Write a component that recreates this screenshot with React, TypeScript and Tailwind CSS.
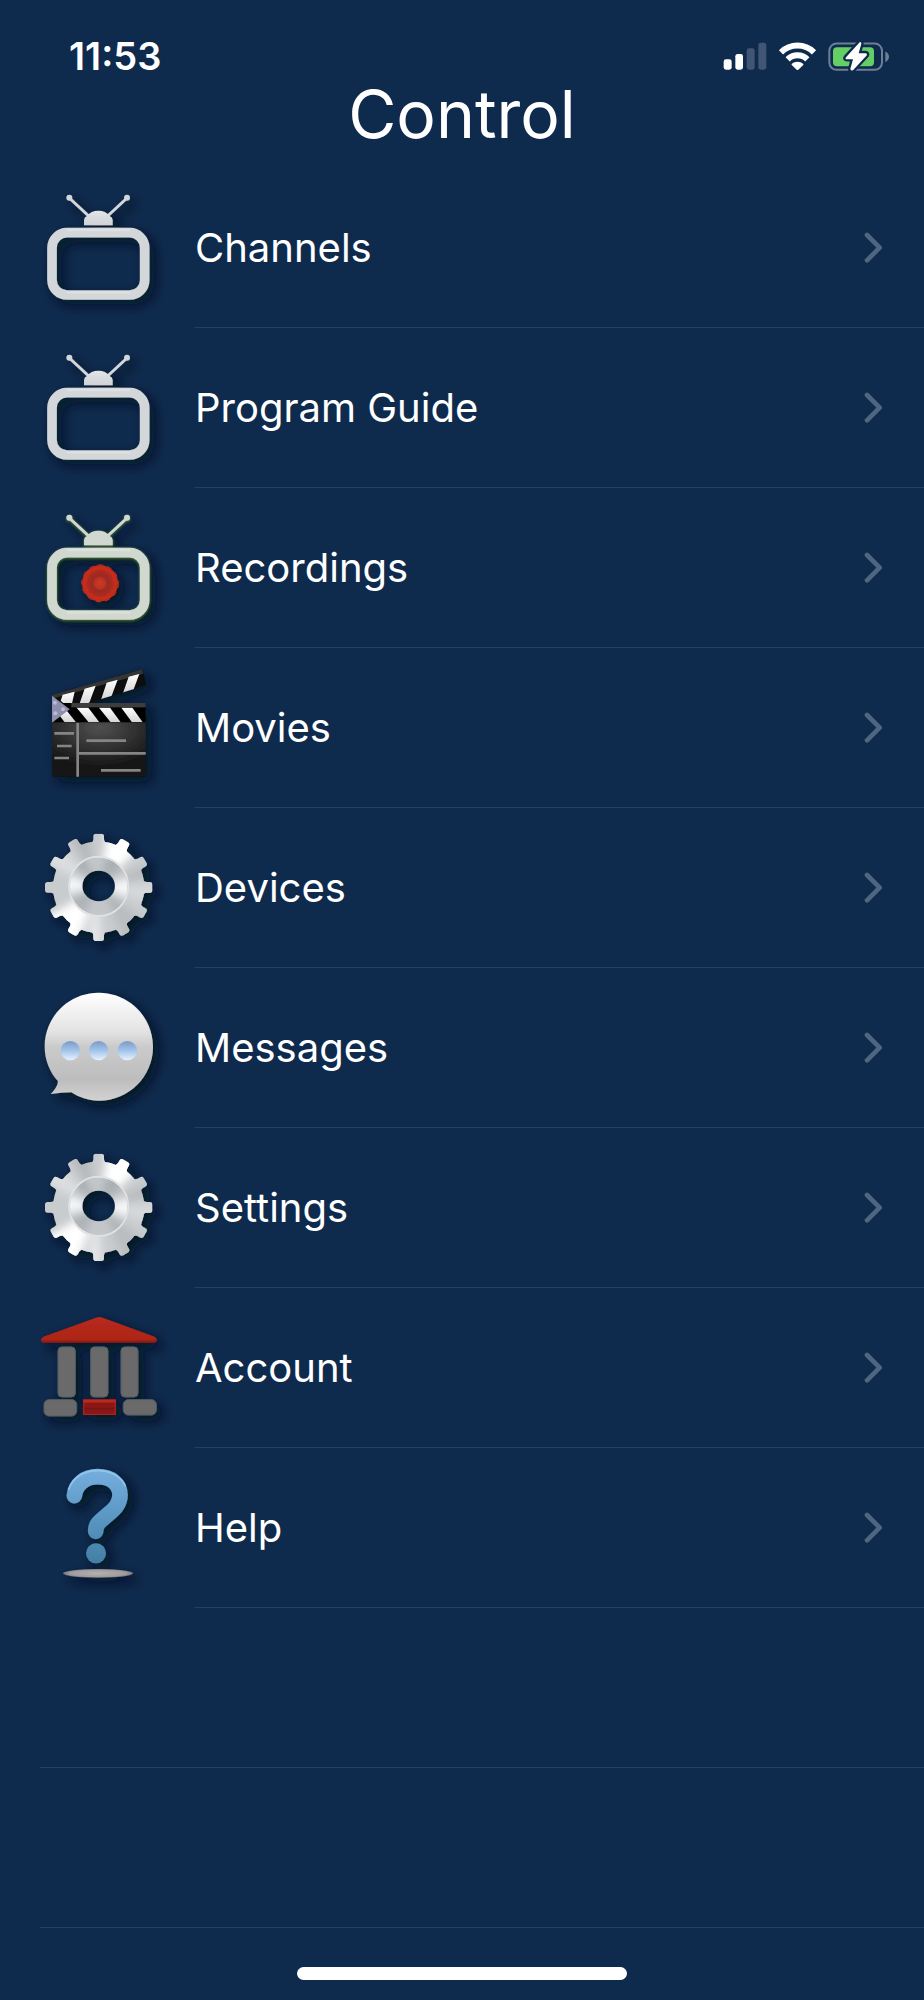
import type { ReactNode } from "react";

type MenuItem = {
  label: string;
  href: string;
  icon: ReactNode;
};

const TEETH = [0, 30, 60, 90, 120, 150, 180, 210, 240, 270, 300, 330];

// Gradients, filters and clips shared by all of the icons below.
function IconDefs() {
  return (
    <svg className="absolute h-0 w-0" aria-hidden="true">
      <defs>
        <filter id="shadow" x="-20%" y="-20%" width="150%" height="150%">
          <feDropShadow dx="16" dy="16" stdDeviation="17" floodColor="#000a18" floodOpacity="0.8" />
        </filter>
        <filter id="green-edge" x="-10%" y="-10%" width="120%" height="120%">
          <feDropShadow dx="0" dy="2" stdDeviation="3" floodColor="#4d7a22" floodOpacity="1" />
        </filter>
        <filter id="soft" x="-20%" y="-20%" width="140%" height="140%">
          <feGaussianBlur stdDeviation="12" />
        </filter>
        <linearGradient id="dome" x1="0" y1="0" x2="0" y2="1">
          <stop offset="0" stopColor="#e3e5e7" />
          <stop offset="1" stopColor="#cfd3d6" />
        </linearGradient>
        <radialGradient id="record">
          <stop offset="0" stopColor="#cf3a22" />
          <stop offset="0.28" stopColor="#bd3222" />
          <stop offset="0.42" stopColor="#9a2a20" />
          <stop offset="0.66" stopColor="#a82c20" />
          <stop offset="0.85" stopColor="#c92d1b" />
          <stop offset="1" stopColor="#c02a1a" />
        </radialGradient>
        <radialGradient id="slate" cx="0.5" cy="0.1" r="0.75">
          <stop offset="0" stopColor="#505050" />
          <stop offset="0.6" stopColor="#2c2c2c" />
          <stop offset="1" stopColor="#141414" />
        </radialGradient>
        <linearGradient id="stripe" x1="0" y1="0" x2="0" y2="1">
          <stop offset="0" stopColor="#ffffff" />
          <stop offset="1" stopColor="#d4d4d4" />
        </linearGradient>
        <linearGradient id="bubble" x1="0" y1="0" x2="0" y2="1">
          <stop offset="0" stopColor="#ffffff" />
          <stop offset="0.35" stopColor="#e4e4e5" />
          <stop offset="0.5" stopColor="#cbcbcc" />
          <stop offset="0.8" stopColor="#bdbdbe" />
          <stop offset="1" stopColor="#d2d2d2" />
        </linearGradient>
        <linearGradient id="dot" x1="0" y1="0" x2="0" y2="1">
          <stop offset="0" stopColor="#7b9bc6" />
          <stop offset="0.45" stopColor="#9dc0e8" />
          <stop offset="1" stopColor="#e6f2ff" />
        </linearGradient>
        <linearGradient id="roof" x1="0" y1="0" x2="0" y2="1">
          <stop offset="0" stopColor="#b82a1c" />
          <stop offset="0.86" stopColor="#ae2517" />
          <stop offset="1" stopColor="#7c1712" />
        </linearGradient>
        <linearGradient id="question" gradientUnits="userSpaceOnUse" x1="0" y1="58" x2="0" y2="340">
          <stop offset="0" stopColor="#76aede" />
          <stop offset="0.5" stopColor="#5b98c4" />
          <stop offset="1" stopColor="#427ea3" />
        </linearGradient>
        <radialGradient id="floor">
          <stop offset="0" stopColor="#b5b0b0" />
          <stop offset="0.8" stopColor="#a09c9e" />
          <stop offset="1" stopColor="#77787f" />
        </radialGradient>
        <clipPath id="gear-shape">
          <circle cx="206" cy="202" r="137" />
          {TEETH.map((angle) => (
            <path
              key={angle}
              d="M190 49 Q190 41 198 41 H214 Q222 41 222 49 V58 Q223 67 232 72 H180 Q189 67 190 58 Z"
              transform={`rotate(${angle} 206 202)`}
            />
          ))}
        </clipPath>
        <clipPath id="gear-ring">
          <circle cx="206" cy="199" r="86" />
        </clipPath>
        <mask id="gear-hole">
          <rect x="0" y="0" width="420" height="420" fill="#fff" />
          <ellipse cx="206" cy="198" rx="49" ry="46" fill="#000" />
        </mask>
        <clipPath id="clap-top">
          <path d="M66 134 L336 60 L348 106 L118 176 L66 140 Z" />
        </clipPath>
        <clipPath id="clap-bottom">
          <rect x="67" y="172" width="280" height="45" />
        </clipPath>
      </defs>
    </svg>
  );
}

function TvShape({ color, dome }: { color: string; dome: string }) {
  return (
    <>
      <path d="M148 84 L206 138 M321 84 L263 138" stroke={color} strokeWidth="9" fill="none" />
      <circle cx="148" cy="83" r="9" fill={color} />
      <circle cx="321" cy="83" r="9" fill={color} />
      <path d="M192 166 V150 Q193 141 201 138 Q213 122 235 122 Q257 122 269 138 Q277 141 278 150 V166 Z" fill={dome} />
      <rect x="96" y="188" width="278" height="187" rx="45" fill="none" stroke={color} strokeWidth="29" />
      <path d="M140 180 H330 M140 367 H330" stroke="#fff" strokeOpacity="0.25" strokeWidth="7" />
    </>
  );
}

function TvIcon() {
  return (
    <svg viewBox="0 -6 480 480" className="h-40 w-40 shrink-0" aria-hidden="true">
      <g filter="url(#shadow)">
        <TvShape color="#d3d7da" dome="url(#dome)" />
      </g>
    </svg>
  );
}

function RecordingIcon() {
  return (
    <svg viewBox="0 -6 480 480" className="h-40 w-40 shrink-0" aria-hidden="true">
      <g filter="url(#shadow)">
        <g filter="url(#green-edge)">
          <TvShape color="#d0d8cf" dome="#d0d8cf" />
        </g>
        <circle cx="240" cy="280" r="54" fill="url(#record)" />
        <circle cx="240" cy="280" r="55" fill="none" stroke="#c62c1b" strokeWidth="3" strokeDasharray="14 14" />
      </g>
    </svg>
  );
}

function MoviesIcon() {
  return (
    <svg viewBox="-30 -6 480 480" className="h-40 w-40 shrink-0" aria-hidden="true">
      <g filter="url(#shadow)">
        <path d="M66 134 L336 58 L349 104 L118 178 H66 Z" fill="#080808" />
        <path d="M66 134 L336 58 L339 72 L66 146 Z" fill="#343434" />
        <g clipPath="url(#clap-top)" fill="url(#stripe)">
          <path d="M98 134 L134 125 L122 178 L92 152 Z" />
          <path d="M164 116 L197 107 L178 158 L146 169 Z" />
          <path d="M230 98 L263 89 L244 140 L213 149 Z" />
          <path d="M296 80 L328 72 L309 123 L278 132 Z" />
        </g>
        <rect x="67" y="159" width="280" height="60" fill="#050505" />
        <rect x="124" y="159" width="223" height="13" fill="#3d3d3f" />
        <g clipPath="url(#clap-bottom)" fill="url(#stripe)">
          <path d="M70 172 H102 L138 217 H104 Z" />
          <path d="M140 173 H175 L208 217 H176 Z" />
          <path d="M207 173 H240 L272 217 H242 Z" />
          <path d="M274 173 H307 L338 217 H306 Z" />
        </g>
        <path d="M66 137 L119 178 L66 218 Z" fill="#8c8fae" />
        <g fill="#b9bbd0">
          <circle cx="75" cy="158" r="6" />
          <circle cx="99" cy="178" r="6" />
          <circle cx="76" cy="190" r="6" />
        </g>
        <rect x="67" y="217" width="280" height="163" fill="url(#slate)" />
        <path
          d="M143 219 V380 M147 310 H347 M73 250 H132 M81 288 H125 M73 324 H117 M169 272 H288 M213 361 H332"
          stroke="#858585"
          strokeWidth="8"
          fill="none"
        />
      </g>
    </svg>
  );
}

function GearIcon() {
  return (
    <svg viewBox="-30 -36 480 480" className="h-40 w-40 shrink-0" aria-hidden="true">
      <g filter="url(#shadow)">
        <g mask="url(#gear-hole)">
          <g clipPath="url(#gear-shape)">
            <rect x="30" y="30" width="360" height="350" fill="#c9ccce" />
            <g filter="url(#soft)">
              <path d="M206 200 L235 20 L355 60 Z" fill="#ffffff" />
              <path d="M206 200 L20 310 L130 400 Z" fill="#ffffff" />
              <path d="M206 200 L400 120 L400 160 Z" fill="#b3b7ba" />
              <path d="M206 200 L400 190 L390 260 Z" fill="#d6d8da" />
              <path d="M206 200 L300 390 L370 320 Z" fill="#b9bdc0" />
              <path d="M206 200 L20 120 L70 60 Z" fill="#dcdee0" />
              <path d="M206 200 L110 30 L170 30 Z" fill="#b4b8bb" />
              <path d="M206 200 L160 400 L215 400 Z" fill="#e6e7e9" />
            </g>
          </g>
          <g clipPath="url(#gear-ring)">
            <rect x="110" y="105" width="190" height="190" fill="#c3c7ca" />
            <g filter="url(#soft)">
              <path d="M206 198 L100 160 L100 225 Z" fill="#f6f7f8" />
              <path d="M206 198 L310 170 L310 240 Z" fill="#f6f7f8" />
              <path d="M206 198 L100 100 L150 95 Z" fill="#a3a9ad" />
              <path d="M206 198 L235 95 L300 120 Z" fill="#a9afb3" />
              <path d="M206 198 L120 240 L150 300 Z" fill="#adb2b6" />
              <path d="M206 198 L270 300 L300 270 Z" fill="#adb2b6" />
            </g>
          </g>
          <circle cx="206" cy="199" r="89" fill="none" stroke="#e0e2e4" strokeWidth="5" />
        </g>
      </g>
    </svg>
  );
}

function MessageIcon() {
  return (
    <svg viewBox="-30 -36 480 480" className="h-40 w-40 shrink-0" aria-hidden="true">
      <g filter="url(#shadow)">
        <path
          d="M206 38 C296 38 369 110 369 200 C369 290 296 362 206 362 C175 362 147 352 124 337 C103 337 83 340 62 342 C74 330 83 318 84 304 C59 276 44 240 44 200 C44 110 116 38 206 38 Z"
          fill="url(#bubble)"
        />
        <circle cx="121" cy="212" r="29" fill="url(#dot)" />
        <circle cx="206" cy="212" r="29" fill="url(#dot)" />
        <circle cx="292" cy="212" r="29" fill="url(#dot)" />
      </g>
    </svg>
  );
}

function AccountIcon() {
  return (
    <svg viewBox="-30 -36 480 480" className="h-40 w-40 shrink-0" aria-hidden="true">
      <g filter="url(#shadow)">
        <path d="M40 110 L198 53 Q208 49 218 53 L374 110 Q386 120 376 129 H38 Q27 120 40 110 Z" fill="url(#roof)" />
        <g fill="#6b6b6b" stroke="#565d66" strokeWidth="3">
          <rect x="84" y="141" width="52" height="150" rx="12" />
          <rect x="182" y="141" width="52" height="150" rx="12" />
          <rect x="273" y="141" width="51" height="150" rx="12" />
          <rect x="42" y="299" width="98" height="49" rx="15" />
          <rect x="280" y="299" width="99" height="46" rx="15" />
        </g>
        <rect x="159" y="298" width="99" height="47" fill="#8c1714" />
        <path d="M159 303 H258" stroke="#b92a1f" strokeWidth="9" />
        <path d="M163 326 H254" stroke="#701414" strokeWidth="5" />
        <path d="M161 308 V345 M256 308 V345 M159 343 H258" stroke="#ab211b" strokeWidth="4" />
      </g>
    </svg>
  );
}

function HelpIcon() {
  return (
    <svg viewBox="-30 -6 480 480" className="h-40 w-40 shrink-0" aria-hidden="true">
      <g filter="url(#shadow)">
        <ellipse cx="204" cy="370" rx="105" ry="13" fill="url(#floor)" />
        <path
          d="M133 137 C137 102 165 80 203 80 C243 80 270 102 270 135 C270 163 252 178 233 194 C208 215 197 222 197 244"
          fill="none"
          stroke="url(#question)"
          strokeWidth="47"
          strokeLinecap="round"
        />
        <path d="M116 118 C129 82 161 62 203 62 C243 62 273 80 286 108" fill="none" stroke="#9cd0f2" strokeOpacity="0.7" strokeWidth="5" strokeLinecap="round" />
        <circle cx="198" cy="310" r="30" fill="url(#question)" />
      </g>
    </svg>
  );
}

function SignalIcon() {
  return (
    <svg viewBox="100 68 132 84" className="h-7 w-11" role="img" aria-label="Cellular signal">
      <rect x="102" y="120" width="24" height="31" rx="7" fill="#fff" />
      <rect x="137" y="104" width="23" height="47" rx="7" fill="#fff" />
      <rect x="171" y="87" width="24" height="64" rx="7" fill="#405674" />
      <rect x="206" y="70" width="24" height="81" rx="7" fill="#405674" />
    </svg>
  );
}

function WifiIcon() {
  return (
    <svg viewBox="264 66 117 87" className="h-[29px] w-[39px]" role="img" aria-label="Wi-Fi">
      <g fill="none" stroke="#fff" strokeWidth="18">
        <path d="M273 97 C301 70 344 70 372 97" />
        <path d="M293 118 C309 102 336 102 352 118" />
      </g>
      <path d="M305 132 C315 123 330 123 340 132 Q341 134 339 136 L325 149 Q322 151 320 149 L306 136 Q304 134 305 132 Z" fill="#fff" />
    </svg>
  );
}

function BatteryIcon() {
  return (
    <svg viewBox="414 64 186 92" className="h-[31px] w-[62px]" role="img" aria-label="Battery charging">
      <rect x="418" y="71" width="158" height="79" rx="22" fill="none" stroke="#6d7f96" strokeWidth="6" />
      <path d="M586 95 Q597 101 597 111 Q597 121 586 127 Z" fill="#6d7f96" />
      <rect x="429" y="82" width="123" height="57" rx="12" fill="#65cf66" />
      <path
        d="M509 67 L468 112 Q464 118 471 118 H489 L481 147 Q482 155 489 151 L530 107 Q533 100 526 100 H506 L514 72 Q514 65 509 67 Z"
        fill="#fff"
        stroke="#0e2a4d"
        strokeWidth="14"
        strokeLinejoin="round"
        paintOrder="stroke"
      />
    </svg>
  );
}

function Chevron() {
  return (
    <svg viewBox="102 95 54 93" className="h-[31px] w-[18px] shrink-0" aria-hidden="true">
      <path d="M111 104 L149 142 L111 180" fill="none" stroke="#50657f" strokeWidth="14" strokeLinecap="round" strokeLinejoin="round" />
    </svg>
  );
}

const items: MenuItem[] = [
  { label: "Channels", href: "#channels", icon: <TvIcon /> },
  { label: "Program Guide", href: "#guide", icon: <TvIcon /> },
  { label: "Recordings", href: "#recordings", icon: <RecordingIcon /> },
  { label: "Movies", href: "#movies", icon: <MoviesIcon /> },
  { label: "Devices", href: "#devices", icon: <GearIcon /> },
  { label: "Messages", href: "#messages", icon: <MessageIcon /> },
  { label: "Settings", href: "#settings", icon: <GearIcon /> },
  { label: "Account", href: "#account", icon: <AccountIcon /> },
  { label: "Help", href: "#help", icon: <HelpIcon /> },
];

export default function App() {
  return (
    <div className="flex min-h-screen flex-col bg-[#0e2a4d] font-['Inter',sans-serif] text-white">
      <IconDefs />

      <header className="pb-5">
        <div className="flex h-20 items-center justify-between pt-8 pr-[34px] pl-[69px]">
          <span className="text-[38px] leading-none font-semibold">11:53</span>
          <div className="flex items-center gap-[11px]">
            <SignalIcon />
            <WifiIcon />
            <BatteryIcon />
          </div>
        </div>
        <h1 className="text-center text-[66px] leading-[68px]">Control</h1>
      </header>

      <nav aria-label="Control">
        <ul>
          {items.map((item) => (
            <li key={item.label}>
              <a href={item.href} className="flex h-40 gap-[15px] pl-5">
                {item.icon}
                <span className="flex flex-1 items-center justify-between border-b border-[#2a3f56] pr-[42px]">
                  <span className="text-[40px] leading-none">{item.label}</span>
                  <Chevron />
                </span>
              </a>
            </li>
          ))}
        </ul>
      </nav>

      {/* empty rows keep the separators going below the last item */}
      <div className="ml-10 h-40 border-b border-[#2a3f56]" />
      <div className="ml-10 h-40 border-b border-[#2a3f56]" />

      <footer className="flex flex-1 items-end justify-center pb-5">
        <div className="h-[13px] w-[330px] rounded-full bg-white" />
      </footer>
    </div>
  );
}
